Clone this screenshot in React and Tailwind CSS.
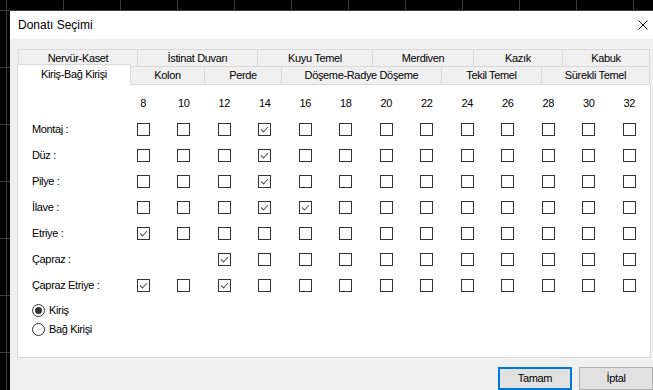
import React from "react";

const cols = [8, 10, 12, 14, 16, 18, 20, 22, 24, 26, 28, 30, 32];
const rows = [
  { label: "Montaj :", checked: [14] },
  { label: "Düz :", checked: [14] },
  { label: "Pilye :", checked: [14] },
  { label: "İlave :", checked: [14, 16] },
  { label: "Etriye :", checked: [8] },
  { label: "Çapraz :", checked: [12], hidden: [8, 10] },
  { label: "Çapraz Etriye :", checked: [8, 12] },
];

const topTabs = [
  { t: "Nervür-Kaset", w: "w-[120px]", first: true },
  { t: "İstinat Duvarı", w: "w-[120px]" },
  { t: "Kuyu Temel", w: "w-[115px]" },
  { t: "Merdiven", w: "w-[101px]" },
  { t: "Kazık", w: "w-[89px]" },
  { t: "Kabuk", w: "w-[87px]" },
];

const bottomTabs = [
  { t: "Kolon", w: "w-[74px]" },
  { t: "Perde", w: "w-[77px]" },
  { t: "Döşeme-Radye Döşeme", w: "w-[160px]" },
  { t: "Tekil Temel", w: "w-[100px]" },
  { t: "Sürekli Temel", w: "w-[108px]" },
];

function Box({ checked }) {
  return (
    <div className="w-[13px] h-[13px] border border-[#333333] bg-white flex items-center justify-center">
      {checked && (
        <svg width="11" height="11" viewBox="0 0 11 11">
          <polyline points="2,5.5 4.5,8 9,3" fill="none" stroke="#555555" strokeWidth="1.1" />
        </svg>
      )}
    </div>
  );
}

function Radio({ on, label }) {
  return (
    <div className="h-[19px] flex items-center">
      <div className="w-[13px] h-[13px] rounded-full border border-[#333333] bg-white flex items-center justify-center">
        {on && <div className="w-[7px] h-[7px] rounded-full bg-[#333333]" />}
      </div>
      <span className="ml-[4px]">{label}</span>
    </div>
  );
}

function Grid() {
  const xs = [6, 63, 120, 177, 234, 291, 348, 405, 462, 519, 576, 633];
  const ys = [10, 67, 124, 181, 238, 295, 352];
  return (
    <svg className="absolute inset-0" width="653" height="390">
      {xs.map((x) => (
        <line key={"x" + x} x1={x + 0.5} y1="0" x2={x + 0.5} y2="390" stroke="#3d3d3d" strokeWidth="1" />
      ))}
      {ys.map((y) => (
        <line key={"y" + y} x1="0" y1={y + 0.5} x2="653" y2={y + 0.5} stroke="#3d3d3d" strokeWidth="1" />
      ))}
    </svg>
  );
}

export default function App() {
  return (
    <div
      className="relative w-[653px] h-[390px] bg-black overflow-hidden pl-[10px] pt-[11px] text-[11px] tracking-[-0.35px] text-black"
      style={{ fontFamily: '"Liberation Sans", Arial, sans-serif' }}
    >
      <Grid />
      <div className="relative w-[643px] h-[379px] bg-[#f0f0f0] flex flex-col overflow-hidden">
        <div className="h-[31px] bg-white flex items-center justify-between pl-[8px] pr-[5px]">
          <span className="text-[12px] tracking-normal">Donatı Seçimi</span>
          <svg width="10" height="10" viewBox="0 0 10 10">
            <line x1="0.5" y1="0.5" x2="9.5" y2="9.5" stroke="#111" strokeWidth="1" />
            <line x1="9.5" y1="0.5" x2="0.5" y2="9.5" stroke="#111" strokeWidth="1" />
          </svg>
        </div>

        <div className="pl-[7px] pt-[10px] flex flex-col">
          <div className="flex ml-[1px] h-[17px]">
            {topTabs.map((tb) => (
              <div
                key={tb.t}
                className={`${tb.w} h-[17px] border-t border-r border-[#d9d9d9] bg-[#f0f0f0] flex items-center justify-center ${tb.first ? "border-l" : ""}`}
              >
                {tb.t}
              </div>
            ))}
          </div>
          <div className="flex items-end h-[18px]">
            <div className="relative z-10 w-[114px] h-[21px] -mb-px bg-white border-l border-t border-r border-[#d9d9d9] flex items-center justify-center pb-[1px]">
              Kiriş-Bağ Kirişi
            </div>
            {bottomTabs.map((tb) => (
              <div
                key={tb.t}
                className={`${tb.w} h-[18px] border-t border-r border-[#d9d9d9] bg-[#f0f0f0] flex items-center justify-center`}
              >
                {tb.t}
              </div>
            ))}
          </div>

          <div className="w-[634px] h-[274px] bg-white border border-[#d9d9d9] pt-[6px] pl-[14px] flex flex-col">
            <div className="flex h-[25px] items-center">
              <div className="w-[91px]" />
              {cols.map((c) => (
                <div key={c} className="w-[40.5px] text-center">
                  {c}
                </div>
              ))}
            </div>
            {rows.map((r) => (
              <div key={r.label} className="flex h-[26px] items-center">
                <div className="w-[91px]">{r.label}</div>
                {cols.map((c) => (
                  <div key={c} className="w-[40.5px] flex justify-center">
                    {!(r.hidden && r.hidden.includes(c)) && <Box checked={r.checked.includes(c)} />}
                  </div>
                ))}
              </div>
            ))}
            <div className="mt-[3px]">
              <Radio on label="Kiriş" />
              <Radio label="Bağ Kirişi" />
            </div>
          </div>

          <div className="flex justify-end gap-[7px] mt-[9px]">
            <div className="w-[74px] h-[23px] bg-[#e1e1e1] border-2 border-[#0078d7] flex items-center justify-center">
              Tamam
            </div>
            <div className="w-[74px] h-[23px] bg-[#e1e1e1] border border-[#adadad] flex items-center justify-center">
              İptal
            </div>
          </div>
        </div>
      </div>
    </div>
  );
}
